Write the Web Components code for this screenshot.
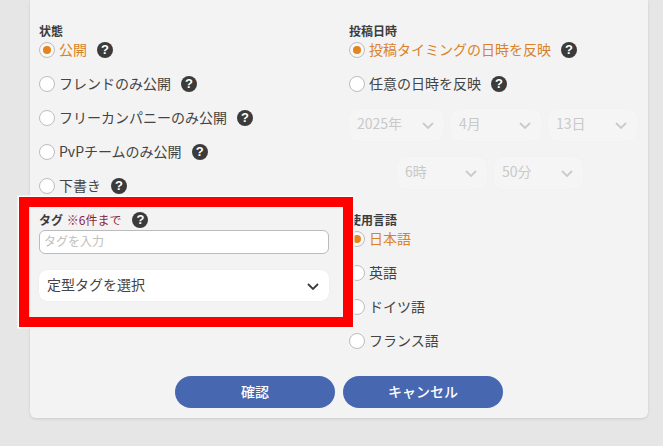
<!DOCTYPE html>
<html lang="ja">
<head>
<meta charset="utf-8">
<title>投稿設定</title>
<style>
  html, body { margin: 0; height: 100%; overflow: hidden; background: #e6e6e6; }
  body { font-family: "Noto Sans CJK JP", "Noto Sans", sans-serif; color: #444; }
</style>
</head>
<body>
<form-panel>
  <form-col slot="left">
    <group-label>状態</group-label>
    <radio-row checked help>公開</radio-row>
    <radio-row help>フレンドのみ公開</radio-row>
    <radio-row help>フリーカンパニーのみ公開</radio-row>
    <radio-row help>PvPチームのみ公開</radio-row>
    <radio-row help>下書き</radio-row>
    <group-label style="margin-top:5px">タグ <span style="color:#8a1f3f;font-weight:400;margin-left:1px">※6件まで</span><help-badge style="margin-left:11px"></help-badge></group-label>
    <tag-input placeholder="タグを入力"></tag-input>
    <select-box style="margin-top:16px;width:290px;height:31px">定型タグを選択</select-box>
  </form-col>
  <form-col slot="right">
    <group-label>投稿日時</group-label>
    <radio-row checked help>投稿タイミングの日時を反映</radio-row>
    <radio-row help>任意の日時を反映</radio-row>
    <select-line style="margin-top:3px;justify-content:flex-start">
      <select-box disabled style="width:95px">2025年</select-box>
      <select-box disabled style="width:90px">4月</select-box>
      <select-box disabled style="width:89px">13日</select-box>
    </select-line>
    <select-line style="margin-top:16px;padding-left:48px">
      <select-box disabled style="width:90px">6時</select-box>
      <select-box disabled style="width:89px">50分</select-box>
    </select-line>
    <group-label style="margin-top:24px">使用言語</group-label>
    <radio-row checked>日本語</radio-row>
    <radio-row>英語</radio-row>
    <radio-row>ドイツ語</radio-row>
    <radio-row>フランス語</radio-row>
  </form-col>
  <action-button slot="actions">確認</action-button>
  <action-button slot="actions">キャンセル</action-button>
</form-panel>
<highlight-frame></highlight-frame>

<script>
// small helper so every component reads the same
function shadow(el, html) {
  el.attachShadow({ mode: 'open' }).innerHTML = html;
}

class FormPanel extends HTMLElement {
  constructor() {
    super();
    shadow(this, `
      <style>
        :host { display: block; width: 618px; margin-left: 30px; box-sizing: border-box; padding: 24px 0 10px 9px;
          background: #f3f3f3; border-radius: 0 0 6px 6px; box-shadow: 0 1px 3px rgba(0,0,0,.12); }
        .cols { display: grid; grid-template-columns: 310px 1fr; }
        .actions { display: flex; justify-content: center; gap: 8px; margin: 13px 0 0 -9px; }
      </style>
      <div class="cols"><slot name="left"></slot><slot name="right"></slot></div>
      <div class="actions"><slot name="actions"></slot></div>`);
  }
}

class FormCol extends HTMLElement {
  constructor() {
    super();
    shadow(this, `<style>:host { display: flex; flex-direction: column; align-items: flex-start; }</style><slot></slot>`);
  }
}

class GroupLabel extends HTMLElement {
  constructor() {
    super();
    shadow(this, `
      <style>
        :host { display: flex; align-items: center; height: 14px; font-size: 12px; font-weight: 700; color: #3c3c3c; line-height: 14px; white-space: pre; }
      </style><slot></slot>`);
  }
}

class HelpBadge extends HTMLElement {
  constructor() {
    super();
    shadow(this, `
      <style>
        :host { display: inline-flex; align-items: center; justify-content: center; width: 16px; height: 16px; flex: none;
          border-radius: 50%; background: #3b3b3b; color: #fff; font: 700 13px/16px "Liberation Sans", sans-serif; }
      </style>?`);
  }
}

class RadioRow extends HTMLElement {
  constructor() {
    super();
    const help = this.hasAttribute('help') ? '<help-badge></help-badge>' : '';
    shadow(this, `
      <style>
        :host { display: flex; align-items: center; height: 24px; margin-bottom: 10px; font-size: 14px; color: #444; white-space: nowrap; }
        :host([checked]) { color: #d9822b; }
        .ring { width: 16px; height: 16px; box-sizing: border-box; border: 1px solid #bdbdbd; border-radius: 50%; background: #fff; margin-right: 4px; display: flex; align-items: center; justify-content: center; }
        :host([checked]) .ring { background: #f8f8f8; }
        :host([checked]) .ring::after { content: ''; width: 8px; height: 8px; border-radius: 50%; background: #e5831c; }
        help-badge { margin-left: 10px; }
        .t { position: relative; top: -1px; }
      </style>
      <span class="ring"></span><span class="t"><slot></slot></span>${help}`);
  }
}

class TagInput extends HTMLElement {
  constructor() {
    super();
    const ph = this.getAttribute('placeholder') || '';
    shadow(this, `
      <style>
        :host { display: block; margin-top: 3px; }
        input { display: block; width: 290px; height: 24px; box-sizing: border-box; padding: 0 4px 3px; border: 1px solid #bbb; border-radius: 6px;
          background: #fff; font: 12px "Noto Sans CJK JP", sans-serif; outline: none; }
        input::placeholder { color: #c0c0c0; opacity: 1; }
      </style>
      <input type="text" placeholder="${ph}">`);
  }
}

class SelectBox extends HTMLElement {
  constructor() {
    super();
    shadow(this, `
      <style>
        :host { display: flex; align-items: center; justify-content: space-between; box-sizing: border-box; height: 32px; padding: 0 9px 0 8px;
          background: #fff; border-radius: 8px; box-shadow: 0 0 1px rgba(0,0,0,.12); font-size: 14px; color: #444; white-space: nowrap; }
        :host([disabled]) { background: #f5f5f5; color: #c9c9c9; box-shadow: 0 0 1px rgba(0,0,0,.05); }
        .t { position: relative; top: -2px; }
        svg { width: 14px; height: 9px; fill: none; stroke: #3c3c3c; stroke-width: 1.8; margin-top: 1px; }
        :host([disabled]) svg { stroke: #cacaca; }
      </style>
      <span class="t"><slot></slot></span>
      <svg viewBox="0 0 14 9"><path d="M2 2l5 5 5-5"/></svg>`);
  }
}

class SelectLine extends HTMLElement {
  constructor() {
    super();
    shadow(this, `<style>:host { display: flex; gap: 7px; }</style><slot></slot>`);
  }
}

class ActionButton extends HTMLElement {
  constructor() {
    super();
    shadow(this, `
      <style>
        :host { display: flex; align-items: center; justify-content: center; width: 160px; height: 32px; padding-bottom: 3px; box-sizing: border-box; border-radius: 16px;
          background: #4767b0; color: #fff; font-size: 14px; font-weight: 500; cursor: pointer; }
      </style><slot></slot>`);
  }
}

// the red annotation laid over the screenshot
class HighlightFrame extends HTMLElement {
  constructor() {
    super();
    shadow(this, `
      <style>
        :host { position: absolute; left: 19px; top: 197px; width: 334px; height: 130px; box-sizing: border-box;
          border: 10px solid #fe0000; box-shadow: 0 0 0 1.5px #fff; pointer-events: none; }
      </style>`);
  }
}

customElements.define('help-badge', HelpBadge);
customElements.define('form-panel', FormPanel);
customElements.define('form-col', FormCol);
customElements.define('group-label', GroupLabel);
customElements.define('radio-row', RadioRow);
customElements.define('tag-input', TagInput);
customElements.define('select-box', SelectBox);
customElements.define('select-line', SelectLine);
customElements.define('action-button', ActionButton);
customElements.define('highlight-frame', HighlightFrame);
</script>
</body>
</html>
